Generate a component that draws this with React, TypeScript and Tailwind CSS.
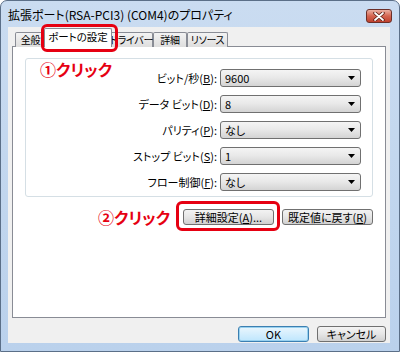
import type { ReactNode } from 'react'

const jp = "font-['Noto_Sans_CJK_JP',sans-serif] [font-feature-settings:'palt']"

type Row = { label: ReactNode; value: string }

const rows: Row[] = [
  { label: <>ビット/秒(<u>B</u>):</>, value: '9600' },
  { label: <>データ ビット(<u>D</u>):</>, value: '8' },
  { label: <>パリティ(<u>P</u>):</>, value: 'なし' },
  { label: <>ストップ ビット(<u>S</u>):</>, value: '1' },
  { label: <>フロー制御(<u>F</u>):</>, value: 'なし' },
]

function Combo({ value }: { value: string }) {
  return (
    <div className="flex h-[18px] w-[141px] items-center justify-between rounded-[3px] border border-[#707070] bg-gradient-to-b from-[#f4f4f4] via-[#e8e8e8] to-[#d4d4d4] pl-[4px] pr-[5px]">
      <span className="text-[11px] leading-none text-black">{value}</span>
      <svg width="7" height="4" viewBox="0 0 7 4">
        <path d="M0 0h7L3.5 4z" fill="#000" />
      </svg>
    </div>
  )
}

function Button({ children, width, def }: { children: ReactNode; width: string; def?: boolean }) {
  return (
    <div
      className={`flex h-[16px] ${width} items-center justify-center rounded-[3px] border text-[11px] leading-none text-black ${
        def
          ? 'border-[#3c7fb1] bg-gradient-to-b from-[#eaf6fd] to-[#bee6fd] shadow-[inset_0_0_0_1px_#98d1ef]'
          : 'border-[#707070] bg-gradient-to-b from-[#f3f3f3] via-[#e6e6e6] to-[#d0d0d0]'
      }`}
    >
      {children}
    </div>
  )
}

function Tab({ children, width }: { children: ReactNode; width: string }) {
  return (
    <div
      className={`flex h-[15px] ${width} shrink-0 items-center justify-center whitespace-nowrap rounded-t-[2px] border border-b-0 border-[#898c95] bg-gradient-to-b from-[#f3f3f3] to-[#dedede] text-[10px] leading-none tracking-[-0.3px] text-black`}
    >
      {children}
    </div>
  )
}

export default function App() {
  return (
    <div className={`${jp} flex h-[352px] w-[400px] flex-col rounded-t-[7px] border border-[#5b6f88] bg-gradient-to-b from-[#cadcf1] to-[#bad1ec] pb-[8px] pl-[7px] pr-[9px]`}>
      {/* title bar */}
      <div className="flex h-[26px] items-start">
        <span className="mt-[8px] text-[12px] leading-none text-black">拡張ポート(RSA-PCI3) (COM4)のプロパティ</span>
        <div className="-mr-[2px] ml-auto mt-[8px] flex h-[14px] w-[26px] items-center justify-center rounded-[3px] border border-[#6b2f28] bg-gradient-to-b from-[#eab1a4] via-[#d46450] to-[#c0412e]">
          <svg width="12" height="9" viewBox="0 0 12 9">
            <path d="M2 1l8 7M10 1L2 8" stroke="#5a1d14" strokeWidth="3.4" strokeLinecap="round" />
            <path d="M2 1l8 7M10 1L2 8" stroke="#fff" strokeWidth="1.8" strokeLinecap="round" />
          </svg>
        </div>
      </div>

      {/* client area */}
      <div className="flex flex-1 flex-col bg-[#f0f0f0] px-[4px] pt-[1px]">
        {/* tabs */}
        <div className="relative z-10 -mb-px flex h-[19px] items-end pl-[3px]">
          <Tab width="w-[31px]">全般</Tab>
          <div className="relative z-10 -mx-[2px] flex h-[19px] w-[68px] shrink-0 items-start justify-center whitespace-nowrap rounded-t-[2px] border border-b-0 border-[#898c95] bg-white pt-[3px] text-[10.5px] leading-none text-black">
            ポートの設定
            <div className="pointer-events-none absolute -bottom-[5px] -left-[4px] -right-[7px] -top-[5px] rounded-[6px] border-[3px] border-[#e60012]" />
          </div>
          <Tab width="w-[43px]">ドライバー</Tab>
          <Tab width="w-[34px]">詳細</Tab>
          <Tab width="w-[41px]">リソース</Tab>
        </div>

        {/* panel */}
        <div className="flex h-[272px] flex-col border border-[#898c95] bg-white px-[12px] pt-[11px]">
          <div className="relative flex flex-col gap-[8px] rounded-[3px] border border-[#d5dfe5] pb-[5px] pr-[11px] pt-[10px]">
            <span className="absolute left-[14px] top-[1px] text-[16px] font-bold leading-[18px] text-[#e60012]">①クリック</span>
            {rows.map((r, i) => (
              <div key={i} className="flex items-center justify-end gap-[3px]">
                <span className="text-[11px] leading-none text-black">{r.label}</span>
                <Combo value={r.value} />
              </div>
            ))}
          </div>

          <div className="mt-[12px] flex items-center justify-end">
            <span className="mr-[13px] text-[16px] font-bold leading-none text-[#e60012]">②クリック</span>
            <div className="relative">
              <Button width="w-[91px]">詳細設定(<u>A</u>)...</Button>
              <div className="pointer-events-none absolute -bottom-[6px] -left-[7px] -right-[6px] -top-[8px] rounded-[6px] border-[3px] border-[#e60012]" />
            </div>
            <div className="ml-[8px]">
              <Button width="w-[91px]">既定値に戻す(<u>R</u>)</Button>
            </div>
          </div>
        </div>

        {/* bottom buttons */}
        <div className="mt-[8px] flex justify-end gap-[8px]">
          <Button width="w-[71px]" def>
            OK
          </Button>
          <Button width="w-[69px]">キャンセル</Button>
        </div>
      </div>
    </div>
  )
}
